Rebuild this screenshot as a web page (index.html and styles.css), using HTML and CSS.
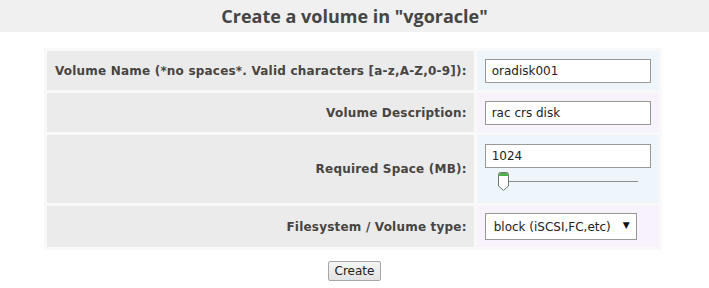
FILE: index.html
```html
<!DOCTYPE html>
<html>
<head>
<meta charset="utf-8">
<link rel="stylesheet" href="styles.css">
</head>
<body>
<h1 class="title">Create a volume in "vgoracle"</h1>
<form class="form">
<table class="grid">
  <tr class="row-a">
    <th class="label">Volume Name (*no spaces*. Valid characters [a-z,A-Z,0-9]):</th>
    <td class="field blue"><input class="text" type="text" value="oradisk001"></td>
  </tr>
  <tr class="row-b">
    <th class="label">Volume Description:</th>
    <td class="field lilac"><input class="text" type="text" value="rac crs disk"></td>
  </tr>
  <tr class="row-c">
    <th class="label">Required Space (MB):</th>
    <td class="field blue tall">
      <input class="text" type="text" value="1024">
      <div class="slider">
        <svg class="thumb" width="11" height="19" viewBox="0 0 11 19">
          <path d="M0.5 2.5 Q0.5 0.5 2.5 0.5 H8.5 Q10.5 0.5 10.5 2.5 V14 L5.5 18.5 L0.5 14 Z" fill="#fff" stroke="#6b786b" stroke-width="1"/>
          <path d="M1 2.5 Q1 1 2.5 1 H8.5 Q10 1 10 2.5 V4 H1 Z" fill="#4caf4c"/>
        </svg>
        <div class="track"></div>
      </div>
    </td>
  </tr>
  <tr class="row-d">
    <th class="label">Filesystem / Volume type:</th>
    <td class="field lilac">
      <div class="select-wrap">
        <select class="select"><option>block (iSCSI,FC,etc)</option></select>
        <span class="arrow">▼</span>
      </div>
    </td>
  </tr>
</table>
<div class="actions"><button class="btn" type="button">Create</button></div>
</form>
</body>
</html>
```
FILE: styles.css
```css
html, body { margin: 0; padding: 0; background: #fff; }
body { font-family: "DejaVu Sans", Verdana, sans-serif; color: #444; }

.title {
  margin: 0;
  height: 32px;
  line-height: 32px;
  background: #f0f0f0;
  text-align: center;
  font-family: "Open Sans", "DejaVu Sans", sans-serif;
  font-size: 18px;
  font-weight: bold;
  color: #454545;
}

.form { margin: 0; padding-top: 16px; }

.grid {
  margin: 0 0 0 44px;
  width: 617px;
  border-spacing: 3px;
  background: #f9f9f9;
}

.label {
  background: #ebebeb;
  text-align: right;
  vertical-align: middle;
  font-size: 12px;
  font-weight: bold;
  letter-spacing: 0.2px;
  color: #474441;
  padding: 0 7px 0 8px;
  white-space: nowrap;
}

.field { padding: 8px 8px 7px 8px; width: 166px; vertical-align: top; }
.blue { background: #eef6fc; }
.lilac { background: #f7f2fc; }

.row-a .label, .row-a .field { height: 24px; }
.row-b .field { height: 24px; padding-top: 8px; padding-bottom: 7px; }
.row-c .field { padding-top: 9px; padding-bottom: 12px; height: 46px; }
.row-d .field { padding-top: 7px; padding-bottom: 6px; height: 28px; }

.text {
  box-sizing: border-box;
  display: block;
  width: 166px;
  height: 24px;
  border: 1px solid #999;
  background: #fff;
  padding: 0 6px;
  font-family: "DejaVu Sans", Verdana, sans-serif;
  font-size: 12px;
  color: #222;
  outline: none;
}

.slider {
  display: flex;
  align-items: center;
  margin: 4px 0 0 13px;
  width: 140px;
  height: 19px;
}
.thumb { display: block; flex: none; }
.track { flex: 1; height: 1px; background: #8a8f8f; margin-top: -1px; }

.select-wrap { position: relative; width: 152px; }
.select {
  box-sizing: border-box;
  display: block;
  width: 152px;
  height: 27px;
  border: 1px solid #999;
  background: #fff;
  padding: 0 0 0 8px;
  font-family: "DejaVu Sans", Verdana, sans-serif;
  font-size: 12px;
  color: #222;
  -webkit-appearance: none;
  appearance: none;
  border-radius: 0;
  outline: none;
}
.arrow {
  position: absolute;
  right: 7px;
  top: 7px;
  font-size: 9px;
  color: #111;
  pointer-events: none;
}

.actions { text-align: center; padding-top: 10px; }
.btn {
  font-family: "DejaVu Sans", Verdana, sans-serif;
  font-size: 12px;
  color: #222;
  height: 20px;
  padding: 0 6px;
  border: 1px solid #a7a7a7;
  border-radius: 2px;
  background: linear-gradient(#f6f6f6, #e3e3e3);
}
```
